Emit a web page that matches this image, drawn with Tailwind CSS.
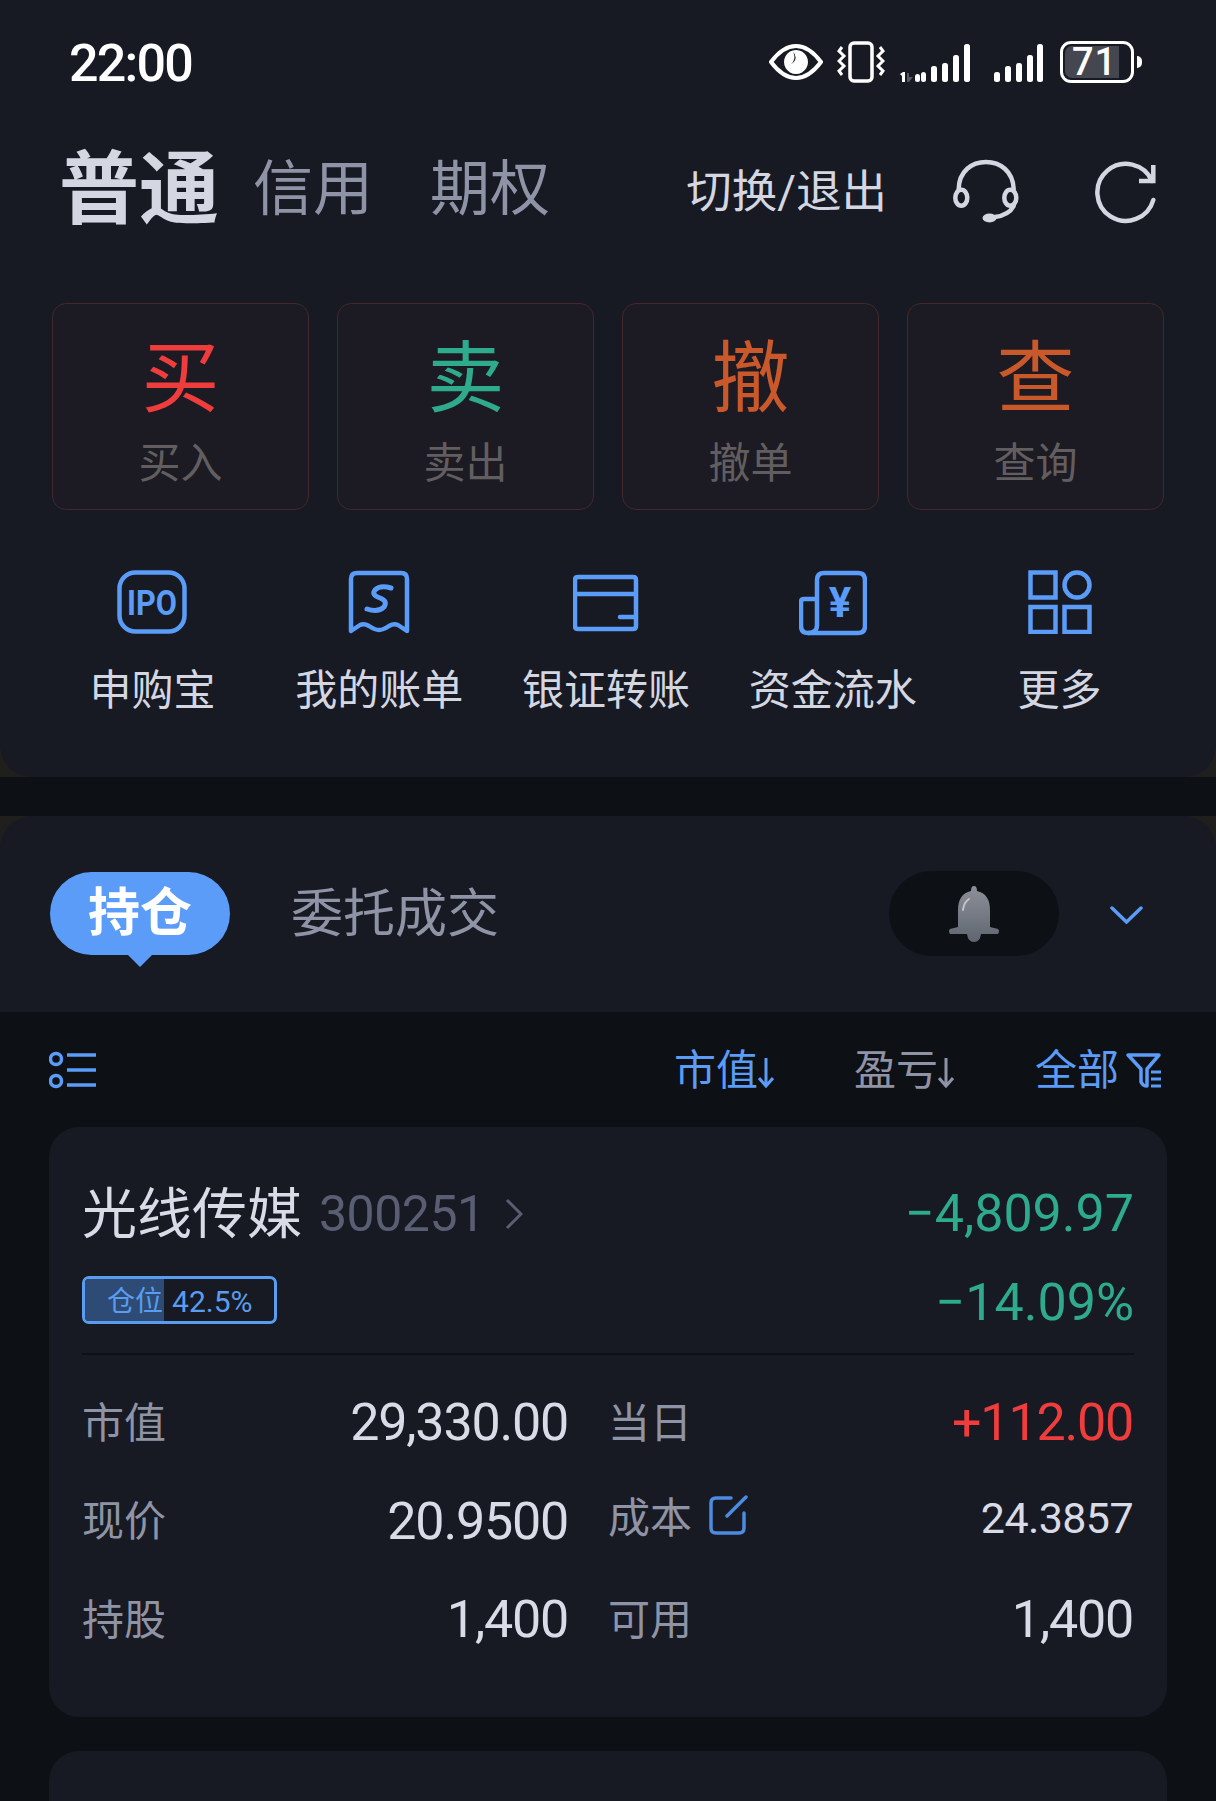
<!DOCTYPE html>
<html lang="zh">
<head>
  <meta charset="UTF-8" />
  <title>持仓</title>
  <script src="https://cdn.jsdelivr.net/npm/@tailwindcss/browser@4"></script>
</head>
<body class="bg-[#0d1015] font-[Roboto,'Noto_Sans_CJK_SC',sans-serif]">
<div class="w-[1216px] h-[1801px] overflow-hidden bg-[#0d1015]">

  <!-- top panel -->
  <div class="bg-[#201f1e]">
    <div class="bg-[#171a23] rounded-b-[32px] h-[777px]">

      <!-- status bar -->
      <div class="h-[124px] flex items-center pl-[69px] pr-[74px] text-white">
        <span class="mt-[3px] text-[52px] leading-none font-medium tracking-[-1.8px]">22:00</span>
        <div class="ml-auto flex items-center">
          <svg width="54" height="38" viewBox="0 0 54 38" class="mr-[14px]">
            <path d="M2 19 Q14 3 27 3 Q40 3 52 19 Q40 35 27 35 Q14 35 2 19Z" fill="none" stroke="#fff" stroke-width="4"/>
            <path fill-rule="evenodd" d="M27 7 a12 12 0 1 0 0.01 0Z M24 9 a7 7 0 0 1 -2 12 a9 9 0 0 0 2 -12Z" fill="#fff"/>
          </svg>
          <svg width="48" height="42" viewBox="0 0 48 42" class="mr-[15px]" fill="none" stroke="#fff" stroke-width="3.5">
            <rect x="13" y="2" width="22" height="38" rx="4"/>
            <path d="M5 6 L2 10 L7 15 L2 20 L7 25 L2 30 L5 34" stroke-width="3"/>
            <path d="M43 6 L46 10 L41 15 L46 20 L41 25 L46 30 L43 34" stroke-width="3"/>
          </svg>
          <svg width="70" height="42" viewBox="0 0 70 42" class="mr-[24px]" fill="#fff">
            <path d="M0 33 L3 31 H5 V41 H2 V35Z"/>
            <path d="M7 32 H9 V36 L13 36 L9 41 H7Z" fill="#55585f"/>
            <rect x="15" y="33" width="5" height="8" rx="2.5"/>
            <rect x="21" y="31" width="5" height="10" rx="2.5"/>
            <rect x="31" y="25" width="6" height="16" rx="2.5"/>
            <rect x="42" y="22" width="6" height="19" rx="2.5"/>
            <rect x="53" y="14" width="6" height="27" rx="2.5"/>
            <rect x="64" y="3" width="6" height="38" rx="2.5"/>
          </svg>
          <svg width="49" height="42" viewBox="0 0 49 42" class="mr-[17px]" fill="#fff">
            <rect x="0" y="31" width="6" height="10" rx="2.5"/>
            <rect x="11" y="25" width="6" height="16" rx="2.5"/>
            <rect x="22" y="22" width="6" height="19" rx="2.5"/>
            <rect x="33" y="14" width="6" height="27" rx="2.5"/>
            <rect x="43" y="3" width="6" height="38" rx="2.5"/>
          </svg>
          <div class="relative w-[74px] h-[42px] rounded-[11px] border-[3px] border-white overflow-hidden flex items-center justify-center">
            <div class="absolute left-[2px] top-[2px] bottom-[2px] w-[54px] bg-[#454750] rounded-l-[7px]"></div>
            <span class="relative text-[38px] leading-none font-medium tracking-[1px] -ml-[5px]">71</span>
          </div>
          <div class="ml-[3px] w-[5px] h-[12px] rounded-r-full bg-white"></div>
        </div>
      </div>

      <!-- account tabs -->
      <div class="h-[132px] flex items-center pl-[59px] pr-[61px]">
        <span class="text-[80px] leading-none font-bold text-[#d4d7e2]">普通</span>
        <span class="ml-[34px] text-[60px] leading-none text-[#8f93a6]">信用</span>
        <span class="ml-[57px] text-[60px] leading-none text-[#8f93a6]">期权</span>
        <span class="ml-auto mt-[6px] text-[45.5px] leading-none text-[#d4d7e2]">切换/退出</span>
        <svg width="70" height="67" viewBox="0 0 70 67" class="ml-[65px]" fill="none" stroke="#d4d7e2" stroke-width="4.5" stroke-linecap="round">
          <path d="M6.7 32 C7 14 20 5 34 5 C48 5 61 14 61.7 32"/>
          <ellipse cx="9.3" cy="40.7" rx="6" ry="8"/>
          <ellipse cx="58.3" cy="40.7" rx="6" ry="8"/>
          <path d="M61.7 49 Q57 58 43 60"/>
          <ellipse cx="37.5" cy="61" rx="6" ry="3.5" fill="#d4d7e2" stroke-width="2"/>
        </svg>
        <svg width="70" height="70" viewBox="0 0 70 70" class="ml-[68px] -mr-[5px]" fill="none" stroke="#d4d7e2" stroke-width="4.5">
          <path d="M62 26 A28.5 28.5 0 1 0 63.3 45" stroke-linecap="round"/>
          <path d="M63.3 10 V26 H49"/>
        </svg>
      </div>

      <!-- trade buttons -->
      <div class="mt-[47px] px-[52px] grid grid-cols-4 gap-x-[28px] w-[1216px]">
        <div class="h-[207px] rounded-[14px] border border-[#44282c] bg-[#1c1a22] flex flex-col items-center pt-[37px]">
          <span class="text-[78px] leading-[78px] text-[#ef3d3d]">买</span>
          <span class="mt-[24px] text-[42px] leading-[42px] text-[#625e60]">买入</span>
        </div>
        <div class="h-[207px] rounded-[14px] border border-[#44282c] bg-[#1c1a22] flex flex-col items-center pt-[37px]">
          <span class="text-[78px] leading-[78px] text-[#2dab8c]">卖</span>
          <span class="mt-[24px] text-[42px] leading-[42px] text-[#625e60]">卖出</span>
        </div>
        <div class="h-[207px] rounded-[14px] border border-[#44282c] bg-[#1c1a22] flex flex-col items-center pt-[37px]">
          <span class="text-[78px] leading-[78px] text-[#c9592a]">撤</span>
          <span class="mt-[24px] text-[42px] leading-[42px] text-[#625e60]">撤单</span>
        </div>
        <div class="h-[207px] rounded-[14px] border border-[#44282c] bg-[#1c1a22] flex flex-col items-center pt-[37px]">
          <span class="text-[78px] leading-[78px] text-[#c9592a]">查</span>
          <span class="mt-[24px] text-[42px] leading-[42px] text-[#625e60]">查询</span>
        </div>
      </div>

      <!-- shortcuts -->
      <div class="mt-[60px] pl-[39px] pr-[43px] grid grid-cols-5 w-[1216px]">
        <div class="flex flex-col items-center">
          <svg width="70" height="64" viewBox="0 0 70 64" fill="none" stroke="#5a9cf8" stroke-width="4.5">
            <rect x="2.5" y="2.5" width="65" height="59" rx="16"/>
            <text x="35" y="45" text-anchor="middle" font-size="35" font-weight="700" fill="#5a9cf8" stroke="none" textLength="50" lengthAdjust="spacingAndGlyphs" font-family="Roboto">IPO</text>
          </svg>
          <span class="mt-[36px] text-[42px] leading-[42px] text-[#d4d7e2]">申购宝</span>
        </div>
        <div class="flex flex-col items-center">
          <svg width="62" height="64" viewBox="0 0 62 64" fill="none" stroke="#5a9cf8" stroke-width="4.5">
            <path d="M3 61 V9 Q3 3 9 3 H53 Q59 3 59 9 V61 L50 55 Q46 53 41 56 Q35 60 31 60 Q27 60 21 56 Q16 53 12 55Z" stroke-linejoin="round"/>
            <path d="M43 18 Q32 15 27 20 Q23 25 32 28 Q40 31 36 37 Q30 43 19 39" stroke-linecap="round" stroke-width="5"/>
          </svg>
          <span class="mt-[36px] text-[42px] leading-[42px] text-[#d4d7e2]">我的账单</span>
        </div>
        <div class="flex flex-col items-center">
          <svg width="66" height="64" viewBox="0 0 66 64" fill="none" stroke="#5a9cf8" stroke-width="4.5">
            <path d="M5 7 H60 Q63 7 63 10 V56 Q63 59 60 59 H5 Q2 59 2 56 V10 Q2 7 5 7Z"/>
            <path d="M2 24 H63"/>
            <path d="M47 47 H63" stroke-linecap="round"/>
          </svg>
          <span class="mt-[36px] text-[42px] leading-[42px] text-[#d4d7e2]">银证转账</span>
        </div>
        <div class="flex flex-col items-center">
          <svg width="68" height="66" viewBox="0 0 68 66" fill="none" stroke="#5a9cf8" stroke-width="4.5" stroke-linejoin="round" class="-mb-[2px]">
            <path d="M18 55 V10 Q18 3 25 3 H59 Q66 3 66 10 V56 Q66 63 59 63 H9 Q2 63 2 56 V32 Q2 29 5 29 H18"/>
            <path d="M18 55 Q18 63 9 63" />
            <text x="41" y="47" text-anchor="middle" font-size="42" font-weight="700" fill="#5a9cf8" stroke="none" font-family="Roboto">¥</text>
          </svg>
          <span class="mt-[36px] text-[42px] leading-[42px] text-[#d4d7e2]">资金流水</span>
        </div>
        <div class="flex flex-col items-center">
          <svg width="64" height="64" viewBox="0 0 64 64" fill="none" stroke="#5a9cf8" stroke-width="4.5">
            <rect x="2.5" y="2.5" width="25" height="25"/>
            <circle cx="49" cy="15" r="12.5"/>
            <rect x="2.5" y="37" width="25" height="25"/>
            <rect x="36.5" y="37" width="25" height="25"/>
          </svg>
          <span class="mt-[36px] text-[42px] leading-[42px] text-[#d4d7e2]">更多</span>
        </div>
      </div>
    </div>
  </div>

  <div class="h-[39px] bg-[#0d1015]"></div>

  <!-- positions header -->
  <div class="bg-[#201f1e]">
    <div class="bg-[#171a23] rounded-t-[32px] h-[196px] flex items-start pt-[56px] pl-[50px]">
      <div class="relative w-[180px] h-[83px] rounded-full bg-[#5a9cf8] flex items-center justify-center">
        <span class="text-[52px] leading-none font-bold text-white">持仓</span>
        <div class="absolute left-[75px] top-[80px] w-[30px] h-[15px] bg-[#5a9cf8] [clip-path:polygon(0_0,100%_0,50%_100%)]"></div>
      </div>
      <span class="ml-[61px] mt-[17px] text-[52px] leading-[52px] text-[#8f93a6]">委托成交</span>
      <div class="ml-auto w-[170px] h-[85px] -mt-[1px] rounded-full bg-[#0d1015] flex items-center justify-center">
        <svg width="52" height="56" viewBox="0 0 52 56">
          <defs>
            <linearGradient id="bellFill" x1="0" y1="0" x2="0" y2="1">
              <stop offset="0" stop-color="#8d9099"/>
              <stop offset="1" stop-color="#5f6670"/>
            </linearGradient>
          </defs>
          <path d="M26 0 Q29 0 29 5 Q42 8 42 24 V41 L50 43 Q52 45 50 48 H33 Q32 56 26 56 Q20 56 19 48 H2 Q0 45 2 43 L10 41 V24 Q10 8 23 5 Q23 0 26 0Z" fill="url(#bellFill)"/>
          <path d="M15 24 Q16 16 21 13" stroke="#c0c3ca" stroke-width="2" fill="none" stroke-linecap="round"/>
        </svg>
      </div>
      <svg width="33" height="18" viewBox="0 0 33 18" class="ml-[51px] mr-[73px] mt-[34px]" fill="none" stroke="#5a9cf8" stroke-width="3.5" stroke-linecap="round">
        <path d="M2 2 L16.5 16 L31 2"/>
      </svg>
    </div>
  </div>

  <!-- sort bar -->
  <div class="h-[115px] flex items-center pl-[49px] pr-[54px]">
    <svg width="48" height="38" viewBox="0 0 48 38" fill="none" stroke="#5a9cf8" stroke-width="3.5">
      <circle cx="7" cy="8" r="5.5"/>
      <circle cx="7" cy="30" r="5.5"/>
      <path d="M18 4 H47 M18 19 H47 M18 34 H47"/>
    </svg>
    <span class="ml-auto mt-[2px] flex items-center text-[42px] leading-none text-[#5a9cf8]">市值<svg width="16" height="32" viewBox="0 0 16 32" fill="none" stroke="#5a9cf8" stroke-width="3" class="mt-[2px]"><path d="M8 2 V30 M1 22 L8 30 L15 22"/></svg></span>
    <span class="ml-[80px] mt-[2px] flex items-center text-[42px] leading-none text-[#8f93a6]">盈亏<svg width="16" height="32" viewBox="0 0 16 32" fill="none" stroke="#8f93a6" stroke-width="3" class="mt-[2px]"><path d="M8 2 V30 M1 22 L8 30 L15 22"/></svg></span>
    <span class="ml-[81px] mt-[2px] flex items-center text-[42px] leading-none text-[#5a9cf8]">全部<svg width="38" height="38" viewBox="0 0 38 38" fill="none" stroke="#5a9cf8" stroke-width="3.5" stroke-linejoin="round" class="ml-[6px] -mr-[1px]"><path d="M3 3 H34 L22 17 V34 Q18 34 16 30 V17Z"/><path d="M26 20 H36 M26 27 H36 M26 34 H36" stroke-width="3"/></svg></span>
  </div>

  <!-- position card -->
  <div class="ml-[49px] w-[1118px] h-[590px] rounded-[30px] bg-[#171a23] px-[33px]">
    <div class="h-[226px] relative">
      <div class="flex items-center pt-[58px]">
        <span class="text-[55px] leading-[58px] text-[#d9dce6]">光线传媒</span>
        <span class="ml-[17px] text-[50px] leading-[58px] tracking-[-0.5px] text-[#5a5e73]">300251</span>
        <svg width="18" height="32" viewBox="0 0 18 32" class="ml-[20px]" fill="none" stroke="#5a5e73" stroke-width="3"><path d="M2 2 L16 16 L2 30"/></svg>
        <span class="ml-auto text-[52px] leading-[58px] text-[#2dab8c]">−4,809.97</span>
      </div>
      <div class="flex items-start justify-between mt-[33px]">
        <div class="relative w-[195px] h-[48px] rounded-[7px] border-[3px] border-[#5a9cf0] overflow-hidden flex items-center pl-[22px]">
          <div class="absolute left-0 top-0 bottom-0 w-[79px] bg-[#2d4b75]"></div>
          <span class="relative mt-[3px] text-[28px] leading-none text-[#5a9cf0]">仓位</span>
          <span class="relative ml-[9px] mt-[3px] text-[30px] leading-none text-[#5a9cf0]">42.5%</span>
        </div>
        <span class="-mt-[2px] text-[52px] leading-[58px] text-[#2dab8c]">−14.09%</span>
      </div>
    </div>
    <div class="h-[2px] bg-[#0d1015]"></div>

    <div class="grid grid-cols-[485px_524px] gap-x-[41px] pt-[19px]">
      <div class="h-[98.5px] flex items-center justify-between">
        <span class="text-[42px] text-[#8f93a6]">市值</span>
        <span class="text-[52px] tracking-[-1.2px] text-[#d9dce6] -mr-[1px]">29,330.00</span>
      </div>
      <div class="h-[98.5px] flex items-center justify-between">
        <span class="text-[42px] text-[#8f93a6]">当日</span>
        <span class="text-[52px] tracking-[-1.2px] text-[#ef3d3d] -mr-[1px]">+112.00</span>
      </div>
      <div class="h-[98.5px] flex items-center justify-between">
        <span class="text-[42px] text-[#8f93a6]">现价</span>
        <span class="text-[52px] tracking-[-1.2px] text-[#d9dce6] -mr-[1px]">20.9500</span>
      </div>
      <div class="h-[98.5px] flex items-center">
        <span class="text-[42px] text-[#8f93a6] -mt-[7px]">成本</span>
        <svg width="39" height="40" viewBox="0 0 39 40" class="ml-[17px] -mt-[13px]" fill="none" stroke="#4d8be0" stroke-width="3.5" stroke-linecap="round">
          <path d="M22 3 H7 Q2 3 2 8 V33 Q2 38 7 38 H30 Q35 38 35 33 V18"/>
          <path d="M18 21 L37 2"/>
        </svg>
        <span class="ml-auto text-[43px] tracking-[-0.6px] text-[#d9dce6] -mt-[8px] -mr-[1px]">24.3857</span>
      </div>
      <div class="h-[98.5px] flex items-center justify-between">
        <span class="text-[42px] text-[#8f93a6]">持股</span>
        <span class="text-[52px] tracking-[-1.2px] text-[#d9dce6] -mr-[1px]">1,400</span>
      </div>
      <div class="h-[98.5px] flex items-center justify-between">
        <span class="text-[42px] text-[#8f93a6]">可用</span>
        <span class="text-[52px] tracking-[-1.2px] text-[#d9dce6] -mr-[1px]">1,400</span>
      </div>
    </div>
  </div>

  <!-- next card, cut off by the screen edge -->
  <div class="ml-[49px] mt-[34px] w-[1118px] h-[120px] rounded-t-[30px] bg-[#171a23]"></div>
</div>
</body>
</html>
